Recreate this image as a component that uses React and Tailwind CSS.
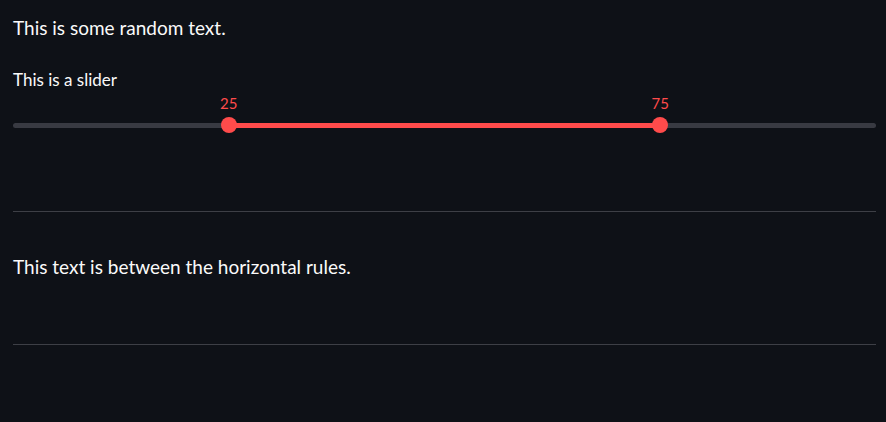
const Slider = ({ min = 0, max = 100, low, high }) => {
  const pct = (v) => ((v - min) / (max - min)) * 100;

  return (
    <div className="relative">
      <div className="relative h-5">
        <span
          className="absolute top-0 -translate-x-1/2 text-[15px] leading-5 text-[#ff4b4b]"
          style={{ left: `${pct(low)}%` }}
        >
          {low}
        </span>
        <span
          className="absolute top-0 -translate-x-1/2 text-[15px] leading-5 text-[#ff4b4b]"
          style={{ left: `${pct(high)}%` }}
        >
          {high}
        </span>
      </div>
      <div className="relative flex h-6 items-center">
        <div className="h-[5px] w-full rounded-full bg-[#383a42]" />
        <div
          className="absolute h-[5px] bg-[#ff4b4b]"
          style={{ left: `${pct(low)}%`, width: `${pct(high) - pct(low)}%` }}
        />
        <div
          className="absolute h-4 w-4 -translate-x-1/2 rounded-full bg-[#ff4b4b]"
          style={{ left: `${pct(low)}%` }}
        />
        <div
          className="absolute h-4 w-4 -translate-x-1/2 rounded-full bg-[#ff4b4b]"
          style={{ left: `${pct(high)}%` }}
        />
      </div>
    </div>
  );
};

const App = () => {
  return (
    <div className="flex min-h-screen flex-col bg-[#0e1117] pl-[13px] pr-[10px] pt-4 text-[#fafafa] font-['Lato','Noto_Sans',sans-serif]">
      <p className="text-[19px] leading-6">This is some random text.</p>

      <div className="mt-[30px] flex flex-col gap-[3px]">
        <label className="text-[17px] leading-5">This is a slider</label>
        <Slider low={25} high={75} />
      </div>

      <hr className="mt-[74px] border-t border-[#3d3f46]" />

      <p className="mt-[43px] text-[19px] leading-6">This text is between the horizontal rules.</p>

      <hr className="mt-[65px] border-t border-[#3d3f46]" />
    </div>
  );
};

export default App;
